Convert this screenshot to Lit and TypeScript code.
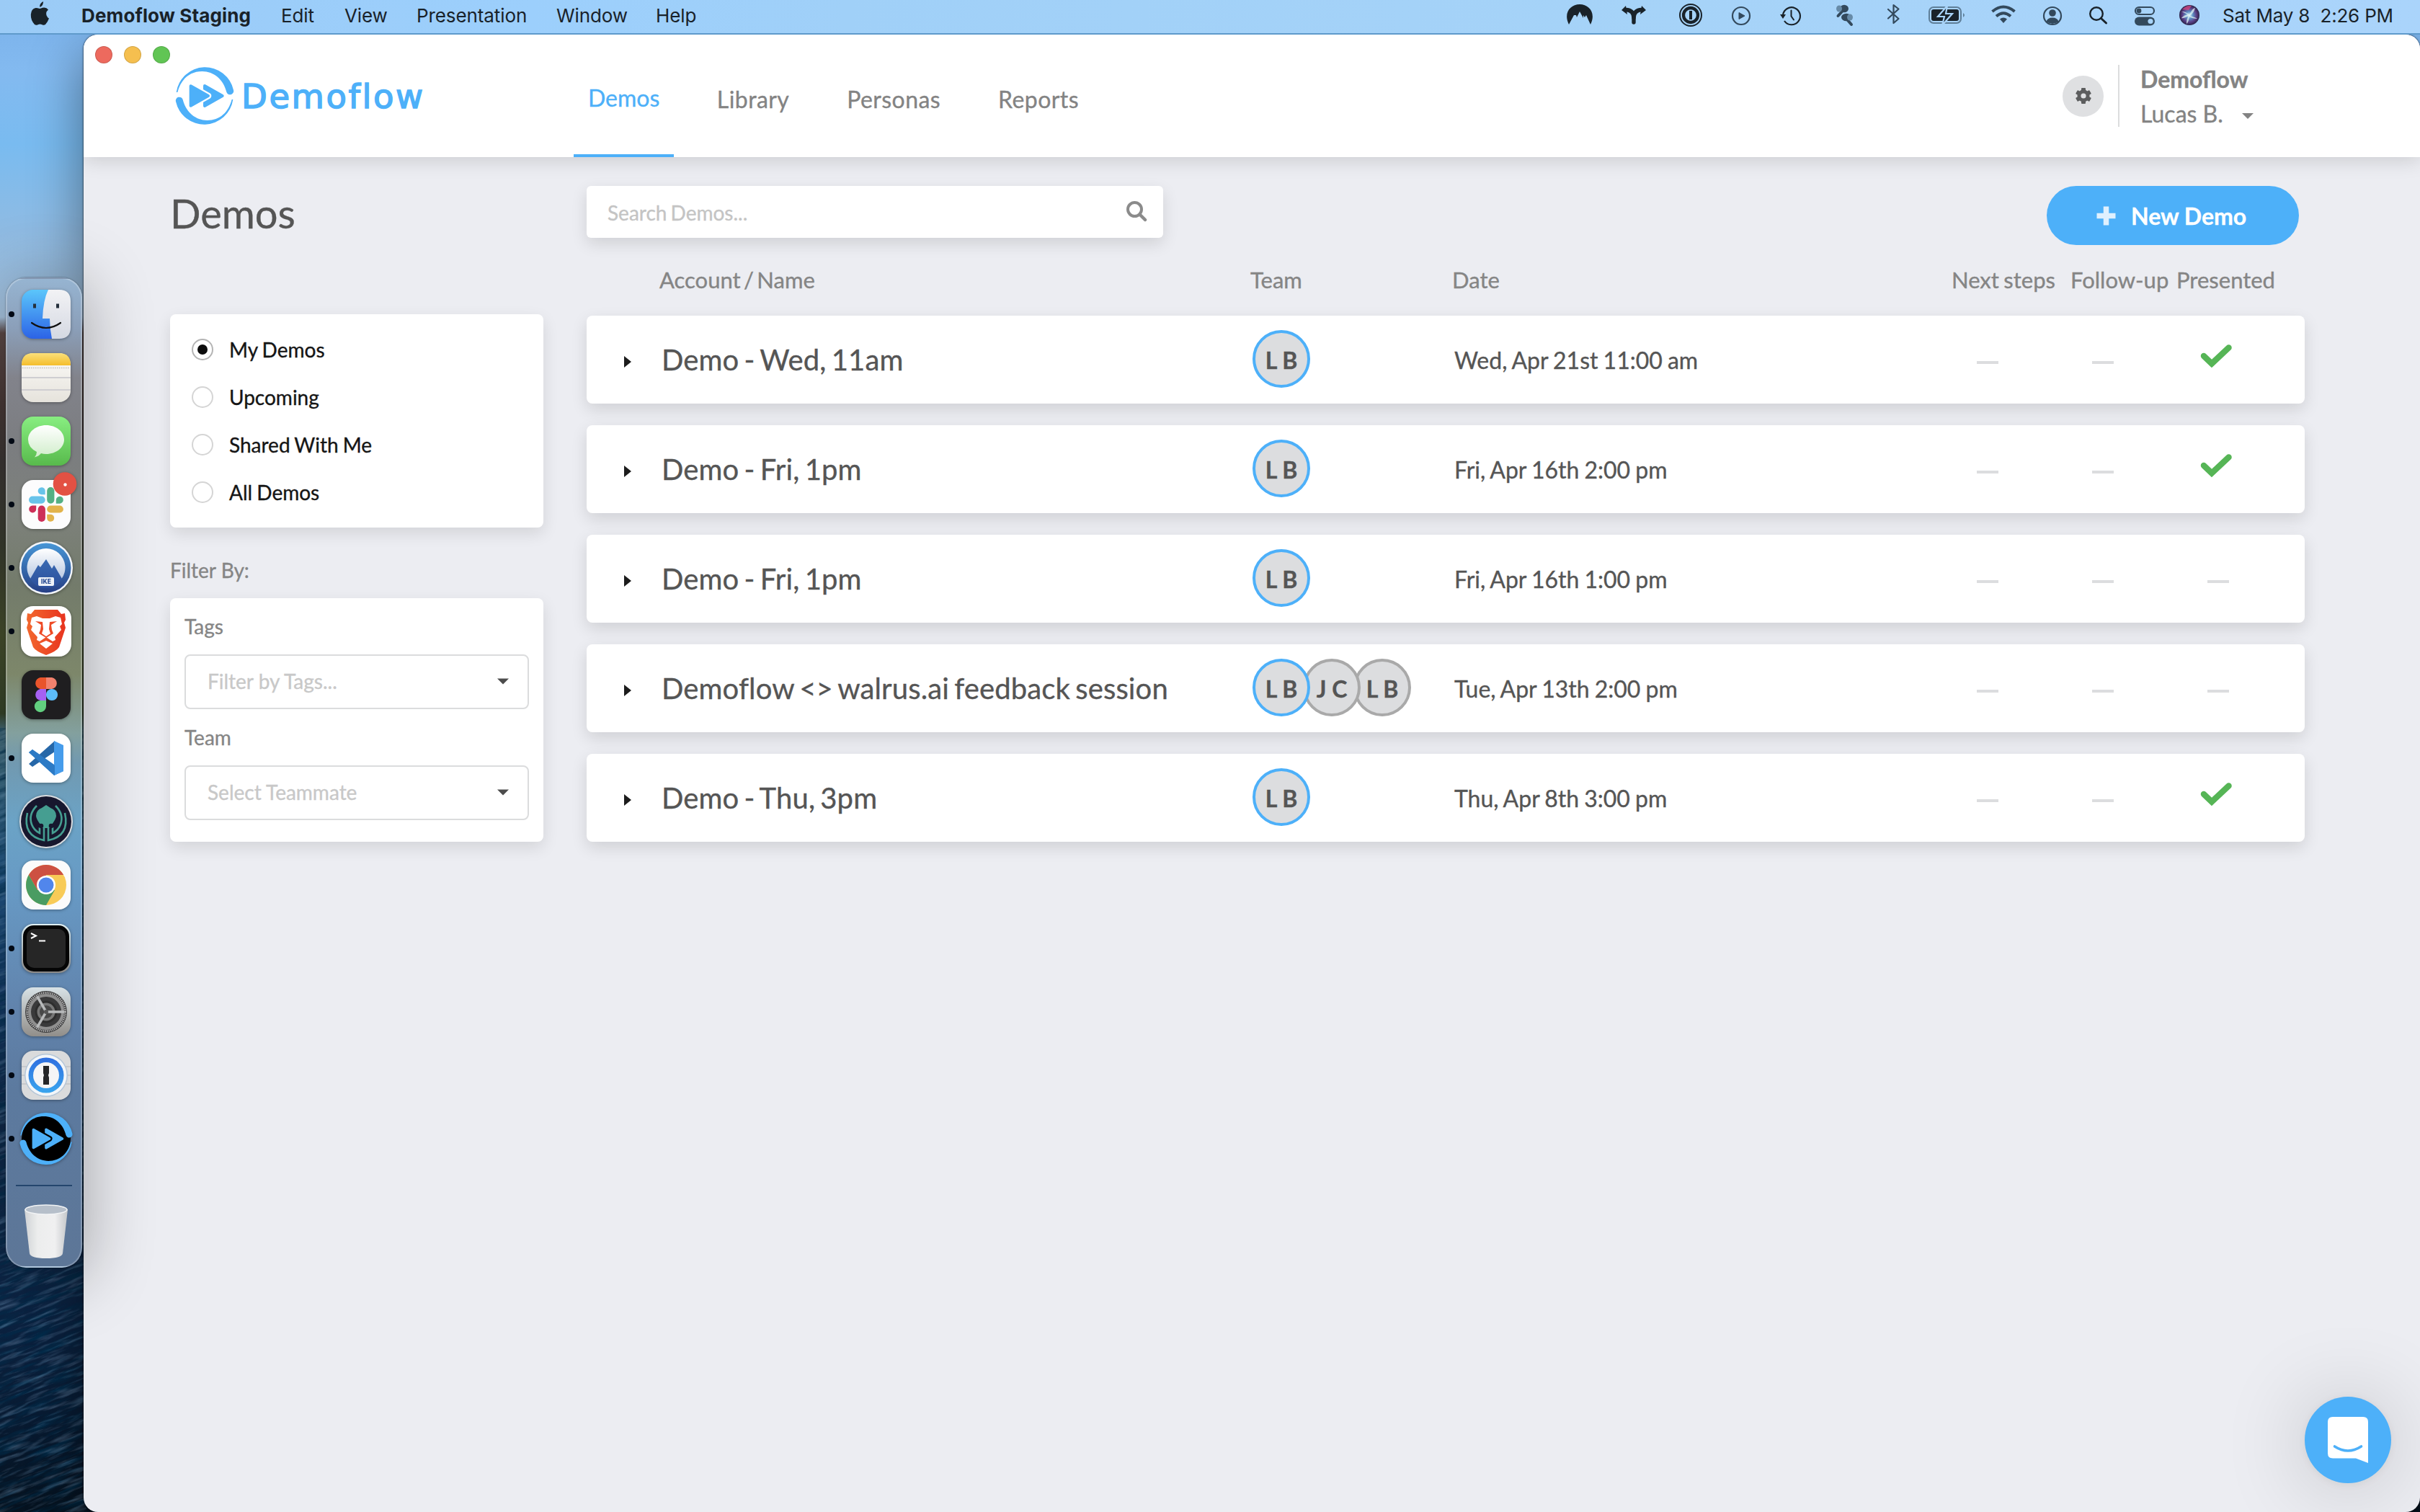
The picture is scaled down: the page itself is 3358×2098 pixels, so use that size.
import { LitElement, html, css, svg } from "lit";
import { customElement } from "lit/decorators.js";
import { classMap } from "lit/directives/class-map.js";

/* ---------- shared drawings ---------- */

const swoosh =
  "M-118-15A121 121 0 0 1 120-24A15 15 0 0 1 91-16C78-68 38-102-10-102C-64-102-99-68-113-15Z";

/* Brand mark, 240 units wide and centred on the origin. */
const brandMark = (gap: string) => svg`
  <path d=${swoosh} fill="#4db0f9"/>
  <path d=${swoosh} fill="#4db0f9" transform="rotate(180)"/>
  <path d="M0-42L74 0L0 42Z" fill="#4db0f9" stroke="#4db0f9" stroke-width="12" stroke-linejoin="round"/>
  <path d="M-58-41L15 0L-58 41Z" fill=${gap} stroke=${gap} stroke-width="26" stroke-linejoin="round"/>
  <path d="M-58-41L15 0L-58 41Z" fill="#4db0f9" stroke="#4db0f9" stroke-width="12" stroke-linejoin="round"/>
`;

/* ---------- menu bar ---------- */

const INK = "#192229";
const SOFT = "#33495c";

/* Status icons: left edge and width on the bar, and the drawing. */
const statusIcons = [
  { x: 2172, w: 40, body: svg`<path fill=${INK} d="M2177 35C2169 19 2179 7 2192 7S2215 19 2207 35L2201 22L2199 25L2197 22L2197 26L2192 17L2188 25L2187 22L2184 22Z"/>` },
  { x: 2248, w: 38, body: svg`<g fill="none" stroke=${INK} stroke-width="5.400" stroke-linecap="round"><path d="M2267 32V26Q2267 15 2256 14.500"/><path d="M2267 26Q2267 15 2278 14.500"/></g><path fill=${INK} d="M2250 15L2256 9L2258 21ZM2284 15L2278 9L2276 21Z"/>` },
  { x: 2328, w: 36, body: svg`<circle cx="2346" cy="22" r="15" fill="none" stroke=${INK} stroke-width="2"/><circle cx="2346" cy="22" r="10" fill="none" stroke=${INK} stroke-width="4.300"/><rect x="2344" y="16" width="4" height="12" fill=${INK}/>` },
  { x: 2400, w: 32, body: svg`<circle cx="2416" cy="23" r="12" fill="none" stroke=${SOFT} stroke-width="2.200"/><path d="M2413 18.500L2421 23L2413 27.500Z" fill=${SOFT} stroke=${SOFT}/>` },
  { x: 2468, w: 34, body: svg`<path d="M2474 22A12 12 0 1 1 2476 30" fill="none" stroke=${INK} stroke-width="2.200"/><path d="M2470 21H2478L2474 27Z" fill=${INK}/><path d="M2485.500 15.500V23.500L2489 28.500" fill="none" stroke=${INK} stroke-width="2" stroke-linecap="round"/>` },
  { x: 2544, w: 30, body: svg`<ellipse cx="2559" cy="13" rx="6" ry="5.300" fill=${SOFT}/><path d="M2557 16L2550.500 23" stroke=${SOFT} stroke-width="4" stroke-linecap="round"/><ellipse cx="2552" cy="13" rx="4" ry="4.600" fill="#678ba8"/><ellipse cx="2562" cy="25" rx="7" ry="5.300" fill=${SOFT}/><path d="M2563 28L2569 35" stroke=${SOFT} stroke-width="4" stroke-linecap="round"/><ellipse cx="2567" cy="25" rx="4" ry="4.600" fill="#678ba8"/>` },
  { x: 2616, w: 24, body: svg`<path d="M2620 14L2634.500 27L2627.500 33V8L2634.500 13.500L2620 26.500" fill="none" stroke=${SOFT} stroke-width="2.200" stroke-linejoin="round" stroke-linecap="round"/>` },
  { x: 2674, w: 56, body: svg`<rect x="2677" y="11" width="44" height="22" rx="6" fill="none" stroke="#5f7f99" stroke-width="2"/><path d="M2724 19Q2728 22 2724 25Z" fill="#5f7f99"/><rect x="2680" y="14" width="38" height="16" rx="3" fill=${INK}/><path d="M2702 9L2689 24H2698L2695 36L2709 20H2700Z" fill=${INK} stroke="#a8d3f8" stroke-width="2.200"/>` },
  { x: 2760, w: 40, body: svg`<g fill="none" stroke=${SOFT} stroke-width="4"><path d="M2764.500 17Q2780 4 2795.500 17"/><path d="M2770 23.500Q2780 15 2790 23.500"/></g><path d="M2775 27.500Q2780 23.500 2785 27.500L2780 33Z" fill=${SOFT}/>` },
  { x: 2832, w: 32, body: svg`<circle cx="2848" cy="23" r="12" fill="none" stroke=${SOFT} stroke-width="2.200"/><circle cx="2848" cy="19" r="4.800" fill=${SOFT}/><path d="M2839.500 31Q2841 25.500 2848 25.500T2856.500 31Q2848 37 2839.500 31Z" fill=${SOFT}/>` },
  { x: 2896, w: 32, body: svg`<circle cx="2909" cy="20" r="8.800" fill="none" stroke=${INK} stroke-width="2.400"/><path d="M2915.500 26.500L2922.500 33" stroke=${INK} stroke-width="3" stroke-linecap="round"/>` },
  { x: 2958, w: 36, body: svg`<rect x="2963" y="11" width="26" height="10" rx="5" fill="none" stroke=${SOFT} stroke-width="2.200"/><circle cx="2968" cy="16" r="3.400" fill=${SOFT}/><rect x="2962" y="24.500" width="28" height="12" rx="6" fill=${SOFT}/><circle cx="2984" cy="30.500" r="3.600" fill="#a8d3f8"/>` },
  { x: 3022, w: 32, body: svg`<defs><radialGradient id="siri"><stop offset="0" stop-color="#e8fbff"/><stop offset=".35" stop-color="#5d8fc4"/><stop offset=".7" stop-color="#5b3f86"/><stop offset="1" stop-color="#2a2448"/></radialGradient></defs><circle cx="3038" cy="22" r="14" fill="url(#siri)"/><path d="M3027 17Q3034 17 3038 22Q3042 12 3046 12Q3044 20 3038 23Q3047 25 3049 27Q3042 27 3038 24Q3037 32 3034 34Q3034 27 3037 23Q3029 27 3027 26Q3030 22 3036 21Z" fill="#dff6f4" opacity=".75"/><path d="M3028 14Q3034 8 3041 9L3037 15Z" fill="#e0467f" opacity=".7"/>` },
];

@customElement("menu-bar")
class MenuBar extends LitElement {
  static styles = css`
    :host { display: flex; align-items: center; box-sizing: border-box; height: 48px; padding: 0 37px 4px 41px;
      background: linear-gradient(90deg, #9bcbf6, #9ccffc 22%, #a0d0f8 35%, #a6d3f8 70%, #aad4fb);
      border-bottom: 2px solid #5f9acb; color: #192229; font: 400 26px "Inter", sans-serif; white-space: pre; }
    .apple { width: 28px; height: 36px; margin-right: 44px; margin-top: -4px; }
    .menu { display: grid; grid-template-columns: 277px 88px 100px 194px 138px 70px; letter-spacing: -.1px; }
    .app { font-weight: 700; letter-spacing: .13px; }
    .status { display: flex; margin-left: auto; height: 46px; margin-top: 2px; }
    .clock { margin-left: 30px; width: 237px; letter-spacing: -.18px; }
  `;
  render() {
    return html`
      <svg class="apple" viewBox="0 0 28 36"><path fill=${INK} d="M19 1Q19.500 6 14.500 9Q13 4.500 19 1ZM14 11Q16 10.800 18 9.800Q23 8.500 26 12.500Q20.500 17 25 23Q26 24.200 27 24.500Q25 30 22 33Q20 34.500 17.500 33.200Q14.500 32 11.500 33.200Q9 34.500 7 33Q1.500 27 1.800 19Q2.500 11 8.500 10Q10 9.700 14 11Z"/></svg>
      <div class="menu">
        <span class="app">Demoflow Staging</span><span>Edit</span><span>View</span>
        <span>Presentation</span><span>Window</span><span>Help</span>
      </div>
      <div class="status">
        ${statusIcons.map((s, i) => {
          const prev = statusIcons[i - 1];
          const gap = prev ? s.x - prev.x - prev.w : 0;
          return html`<svg width=${s.w} height="46" viewBox="${s.x} 0 ${s.w} 46" style="margin-left:${gap}px">${s.body}</svg>`;
        })}
      </div>
      <span class="clock">Sat May 8  2:26 PM</span>`;
  }
}

/* ---------- dock ---------- */

const tile = (fill: string) => svg`<rect x="-34" y="-34" width="68" height="68" rx="16" fill=${fill}/>`;

const dockApps = [
  { running: true, body: svg`
    <defs><linearGradient id="fb" x2="0" y2="1"><stop stop-color="#5bc6fb"/><stop offset="1" stop-color="#2c63e6"/></linearGradient>
    <linearGradient id="fw" x2="0" y2="1"><stop stop-color="#f2f2f5"/><stop offset="1" stop-color="#d5d9e2"/></linearGradient></defs>
    ${tile("url(#fb)")}<path d="M3-34H18Q34-34 34-18V18Q34 34 18 34H8Q5 20 5 6H-5Q-4-20 3-34Z" fill="url(#fw)"/>
    <path d="M-16-14.500V-8.500M16-14.500V-8.500" stroke="#26313d" stroke-width="4"/>
    <path d="M-20 12Q0 26 20 12" fill="none" stroke="#111" stroke-width="2.200" stroke-linecap="round"/>` },
  { running: false, body: svg`
    <defs><linearGradient id="nb" x2="0" y2="1"><stop stop-color="#fbfaf8"/><stop offset="1" stop-color="#e6e3dc"/></linearGradient>
    <linearGradient id="ny" x2="0" y2="1"><stop stop-color="#fbe07a"/><stop offset="1" stop-color="#f4bd2c"/></linearGradient></defs>
    ${tile("url(#nb)")}<path d="M-34-17V-18Q-34-34-18-34H18Q34-34 34-18V-17Z" fill="url(#ny)"/>
    <path d="M-33-13.500H33" stroke="#c3bfb8" stroke-width="1.300" stroke-dasharray="1.500 1.500"/>
    <path d="M-34 0H34M-34 17H34" stroke="#cfced1" stroke-width="2"/>` },
  { running: true, body: svg`
    <defs><linearGradient id="mg" x2="0" y2="1"><stop stop-color="#88ee81"/><stop offset="1" stop-color="#58ba4c"/></linearGradient>
    <linearGradient id="mw" x2="0" y2="1"><stop stop-color="#fff"/><stop offset="1" stop-color="#d0edca"/></linearGradient></defs>
    ${tile("url(#mg)")}<path d="M0-22C14-22 25-13 25-2S14 18 0 18Q-4 18-7 17Q-10 21-16 22.500Q-13 19-13 15Q-25 9-25-2C-25-13-14-22 0-22Z" fill="url(#mw)"/>` },
  { running: true, body: svg`
    ${tile("#fcfcfd")}
    <g fill="#68c3ea"><rect x="-24" y="-11.500" width="22.700" height="10.200" rx="5.100"/><path d="M-1.300-13.800H-6.300A5 5 0 1 1-1.300-19Z"/></g>
    <g fill="#54b084"><rect x="1.200" y="-24" width="10.200" height="22.700" rx="5.100"/><path d="M13.800-1.300V-6.300A5 5 0 1 1 19-1.300Z"/></g>
    <g fill="#cd2f58"><rect x="-11.300" y="1.400" width="10.200" height="22.700" rx="5.100"/><path d="M-13.800 1.400V6.400A5 5 0 1 1-19 1.400Z"/></g>
    <g fill="#e2b34b"><rect x="1.200" y="1.400" width="22.700" height="10.200" rx="5.100"/><path d="M1.200 13.800H6.200A5 5 0 1 1 1.200 19Z"/></g>
    <circle cx="26" cy="-28.500" r="16.300" fill="#e35143"/><circle cx="26.500" cy="-27.500" r="2.200" fill="#fff"/>` },
  { running: true, body: svg`
    <defs><linearGradient id="vb" x2="0" y2="1"><stop stop-color="#4796d6"/><stop offset="1" stop-color="#263f85"/></linearGradient>
    <linearGradient id="vw" x2="0" y2="1"><stop stop-color="#fff"/><stop offset="1" stop-color="#b9c9e2"/></linearGradient>
    <linearGradient id="vm" x2="0" y2="1"><stop stop-color="#3a6ab3"/><stop offset="1" stop-color="#2c4f9b"/></linearGradient></defs>
    <circle r="37" fill="#f2f5fa"/><circle r="34.500" fill="url(#vb)"/>
    <path d="M-21.500 15A26.500 26.500 0 1 1 21.500 15Z" fill="url(#vw)"/>
    <path d="M-22 15L-11-4L-8-1L0-12L8 1L11-4L22 15Q14 28 0 28T-22 15Z" fill="url(#vm)"/>
    <rect x="-11" y="13" width="22" height="12" rx="2" fill="#eef2f8"/>
    <text y="22.300" text-anchor="middle" font-family="Inter, sans-serif" font-weight="800" font-size="8.500" fill="#2a4c93">IKE</text>` },
  { running: true, body: svg`
    <defs><linearGradient id="br"><stop stop-color="#f2682e"/><stop offset="1" stop-color="#e8341f"/></linearGradient></defs>
    <rect x="-35" y="-35" width="70" height="70" rx="17" fill="#fff"/>
    <path d="M-16-30H16L21-24L26-25L27-16L25-12L27-5L18 22Q14 28 0 33Q-14 28-18 22L-27-5L-25-12L-27-16L-26-25L-21-24Z" fill="url(#br)"/>
    <path d="M-13-21L-20-19L-22-10L-19-7L-21-2L-12 8L-13 12L-9 14L0 8L9 14L13 12L12 8L21-2L19-7L22-10L20-19L13-21L5-18H-5Z" fill="#fff"/>
    <path d="M-15-14L-5-13L-4-3L-6 3L0 7L6 3L4-3L5-13L15-14L7-9L8-2L10 3L0 9L-10 3L-8-2L-7-9Z" fill="#ee4a25"/>
    <path d="M-9 17L0 13L9 17L0 24Z" fill="#fff"/>` },
  { running: false, body: svg`
    ${tile("#1f1e20")}
    <path d="M0-24H-8A8.100 8.100 0 0 0-8-8H0Z" fill="#e9542b"/><path d="M0-24H8A8.100 8.100 0 0 1 8-8H0Z" fill="#f1816d"/>
    <path d="M0-8H-8A8.100 8.100 0 0 0-8 8H0Z" fill="#a660f2"/><circle cx="8" cy="0" r="8.100" fill="#5dbcf9"/>
    <path d="M0 8H-8A8.100 8.100 0 1 0 0 16Z" fill="#62cf7f"/>` },
  { running: true, body: svg`
    ${tile("#fff")}
    <path d="M-24-8L-19-12L24 18L11 24L-24-8Z" fill="#2f7fcb"/><path d="M-24 8L-19 12L12-9V-24L-24 8Z" fill="#2667a8"/>
    <path d="M11-24L24-18V18L11 24Z" fill="#469ceb"/><path d="M-24-8L-19-12L12 10V24Z" fill="#2c7ac5"/>` },
  { running: false, body: svg`
    <circle r="37" fill="#d9dce0"/><circle r="35" fill="#17172e"/>
    <path d="M-14-8Q-14-16-6-19L0-23L6-19Q14-16 14-8Q14-4 8 4V9H-8V4Q-14-4-14-8Z" fill="#459e91"/>
    <g fill="none" stroke="#459e91" stroke-width="2.600"><path d="M-26-12Q-33 20-3 26V9"/><path d="M26-12Q33 20 3 26V9"/><path d="M-13-22Q-25-10-20 4Q-17 12-9 16V8"/><path d="M13-22Q25-10 20 4Q17 12 9 16V8"/></g>
    <circle cx="-7" cy="6" r="3.300" fill="#17172e"/><circle cx="7" cy="6" r="3.300" fill="#17172e"/>` },
  { running: false, body: svg`
    ${tile("#fbfbfb")}
    <circle r="28" fill="#f8cb57"/><path d="M-24.200-14A28 28 0 0 1 24.200-14H0L-12 7Z" fill="#cd5142"/>
    <path d="M-24.200-14A28 28 0 0 0 0 28L12 7L-12 7Z" fill="#4a9c62"/>
    <circle r="13" fill="#fff"/><circle r="10.500" fill="#5186ec"/>` },
  { running: true, body: svg`
    <defs><linearGradient id="tb" x2="0" y2="1"><stop stop-color="#dff0f4"/><stop offset="1" stop-color="#8a8987"/></linearGradient></defs>
    ${tile("url(#tb)")}<rect x="-32" y="-32" width="64" height="64" rx="15" fill="#050505"/><rect x="-27" y="-27" width="54" height="54" rx="10" fill="#262626"/>
    <path d="M-21-21L-14-17.500L-21-14M-10-10.500H-1" fill="none" stroke="#fff" stroke-width="2"/>` },
  { running: true, body: svg`
    <defs><linearGradient id="sb" x2="0" y2="1"><stop stop-color="#d8e2e6"/><stop offset="1" stop-color="#918e8a"/></linearGradient></defs>
    ${tile("url(#sb)")}<circle r="29" fill="#3a3a3b"/><circle r="26.500" fill="none" stroke="#b9b9b9" stroke-width="3" stroke-dasharray="1.300 1.300"/>
    <circle r="23" fill="none" stroke="#8f8f8f" stroke-width="4"/><circle r="14" fill="#777" stroke="#2e2e2e" stroke-width="3"/><circle r="9" fill="#484848"/>
    <path d="M0 0H25M0 0L-12.500-21.600M0 0L-12.500 21.600" stroke="#b7b9ba" stroke-width="3.500"/><circle r="3" fill="#555"/>` },
  { running: true, body: svg`
    <defs><linearGradient id="pb" x2="0" y2="1"><stop stop-color="#2f6fe0"/><stop offset="1" stop-color="#3aa5ee"/></linearGradient></defs>
    ${tile("#dadbdc")}<path d="M-34-12H34M-34 0H34M-34 12H34" stroke="#c1c3c6" stroke-width="1.500"/>
    <circle r="30" fill="#b4c6d8"/><circle r="28.500" fill="#f3f6f9"/><circle r="24.500" fill="url(#pb)"/><circle r="18" fill="#f5f5f6"/>
    <path d="M-4-13H4V-3L3 0L4 3V13H-4V3L-3 0L-4-3Z" fill="#252628"/>` },
  { running: true, body: svg`<circle r="34" fill="#000"/><g transform="scale(.303)">${brandMark("#000")}</g>` },
];

@customElement("app-dock")
class AppDock extends LitElement {
  static styles = css`
    :host { display: flex; flex-direction: column; align-items: center; box-sizing: border-box; width: 106px; height: 1374px;
      padding-top: 5px; border-radius: 28px; border: 2px solid rgba(255,255,255,.24);
      box-shadow: 0 0 2px rgba(0,0,0,.5), 0 10px 90px 8px rgba(0,0,0,.3);
      background: linear-gradient(#96b4d1, #8b9fb9 5%, #82838b 10%, #7b7d80 17%, #7d817b 24%, #737b6b 31%, #7d876a 40%, #83a09e 46%, #7199b0 49%, #6ba3c6 55%, #6799c4 62%, #6183ac 74%, #5c7a9f 82%, #5d7697); }
    .slot { position: relative; width: 102px; height: 88px; display: grid; place-items: center; }
    .slot svg { overflow: visible; filter: drop-shadow(0 1px 2px rgba(0,0,0,.35)); margin-left: 6px; }
    .dot { position: absolute; left: 2px; top: 40px; width: 8px; height: 8px; border-radius: 50%; background: #020914; }
    .line { width: 78px; height: 2px; margin: 20px 0 25px; background: #24466d; }
    .trash { margin-left: 6px; }
  `;
  render() {
    return html`
      ${dockApps.map((a) => html`<div class="slot">
        ${a.running ? html`<i class="dot"></i>` : null}
        <svg width="76" height="76" viewBox="-38 -38 76 76">${a.body}</svg></div>`)}
      <div class="line"></div>
      <svg class="trash" width="60" height="76" viewBox="0 0 60 76">
        <defs><linearGradient id="tr"><stop stop-color="#cfd2d5"/><stop offset=".3" stop-color="#eceded"/><stop offset=".7" stop-color="#f0f0f1"/><stop offset="1" stop-color="#c4c7ca"/></linearGradient></defs>
        <path d="M0 7L7 68Q8 75 30 75T53 68L60 7Z" fill="url(#tr)"/><ellipse cx="30" cy="7.500" rx="29" ry="6.500" fill="#b6bfca" stroke="#f1f3f5" stroke-width="1.500"/>
      </svg>`;
  }
}

/* ---------- application window ---------- */

interface Demo { name: string; team: string[]; date: string; presented: boolean; }

const demos: Demo[] = [
  { name: "Demo - Wed, 11am", team: ["L B"], date: "Wed, Apr 21st 11:00 am", presented: true },
  { name: "Demo - Fri, 1pm", team: ["L B"], date: "Fri, Apr 16th 2:00 pm", presented: true },
  { name: "Demo - Fri, 1pm", team: ["L B"], date: "Fri, Apr 16th 1:00 pm", presented: false },
  { name: "Demoflow <> walrus.ai feedback session", team: ["L B", "J C", "L B"], date: "Tue, Apr 13th 2:00 pm", presented: false },
  { name: "Demo - Thu, 3pm", team: ["L B"], date: "Thu, Apr 8th 3:00 pm", presented: true },
];

@customElement("app-header")
class AppHeader extends LitElement {
  static styles = css`
    :host { position: relative; z-index: 1; display: flex; align-items: center; height: 170px; background: #fff; color: #838383;
      font-size: 32px; box-shadow: 0 4px 26px rgba(0,0,0,.15); }
    .lights { position: absolute; left: 16px; top: 16px; display: flex; gap: 16px; }
    .lights i { box-sizing: border-box; width: 24px; height: 24px; border-radius: 50%; border: 1px solid rgba(0,0,0,.14); }
    .red { background: #ed6a5e; } .amber { background: #f5bf4f; } .green { background: #61c554; }
    .brand { display: flex; align-items: center; width: 553px; margin-left: 127px; color: #4db0f9; }
    .brand svg { overflow: visible; }
    .word { margin-left: 10px; padding-top: 1px; font: 400 46.500px "DejaVu Sans", sans-serif; letter-spacing: 2.6px; -webkit-text-stroke: 1.5px currentColor; }
    nav { display: flex; gap: 40px; height: 170px; letter-spacing: .42px; }
    .tab { box-sizing: border-box; display: flex; align-items: center; height: 170px; padding: 13px 20px 0; border-bottom: 4px solid transparent; }
    .tab.on { color: #4db0f9; border-color: #4db0f9; padding: 9px 19.500px 0 20px; letter-spacing: 0; }
    .gear { width: 57px; height: 57px; margin-left: auto; border-radius: 50%; background: #dfe0e2; display: grid; place-items: center; }
    .rule { width: 2px; height: 86px; margin: 0 29px 0 20px; background: #dcddde; }
    .who { width: 388px; line-height: 48px; padding-top: 1px; }
    .who b { display: block; }
    .who svg { margin-left: 25px; vertical-align: 4px; }
  `;
  render() {
    return html`
      <div class="lights"><i class="red"></i><i class="amber"></i><i class="green"></i></div>
      <div class="brand"><svg width="82" height="82" viewBox="-123 -123 246 246">${brandMark("#fff")}</svg><span class="word">Demoflow</span></div>
      <nav>
        ${["Demos", "Library", "Personas", "Reports"].map((t, i) => html`<div class=${classMap({ tab: true, on: i === 0 })}>${t}</div>`)}
      </nav>
      <div class="gear"><svg width="24" height="24" viewBox="-12 -12 24 24">
        <g fill="#5c5d5e">${[0, 60, 120].map((a) => svg`<rect x="-3" y="-11" width="6" height="22" rx="1" transform="rotate(${a})"/>`)}</g>
        <circle r="6" fill="none" stroke="#5c5d5e" stroke-width="5"/><circle r="3.600" fill="#dfe0e2"/></svg></div>
      <div class="rule"></div>
      <div class="who"><b>Demoflow</b>Lucas B.<svg width="18" height="10" viewBox="0 0 18 10"><path d="M1 1H17L9 9Z" fill="#838383"/></svg></div>`;
  }
}

@customElement("side-filters")
class SideFilters extends LitElement {
  static styles = css`
    :host { display: block; font-size: 28px; line-height: 34px; color: #858585; }
    h1 { margin: 44px 0 106px; font-weight: 400; font-size: 56px; line-height: 68px; color: #555; }
    .card { background: #fff; border-radius: 8px; box-shadow: 0 8px 22px rgba(0,0,0,.11); }
    .views { padding: 16px 30px; color: #151515; word-spacing: -1px; }
    .view { display: flex; align-items: center; height: 66px; gap: 22px; }
    .radio { box-sizing: border-box; width: 30px; height: 30px; border: 2px solid #d5d5d5; border-radius: 50%; display: grid; place-items: center; }
    .on .radio { border-color: #b4b4b4; }
    .on .radio::after { content: ""; width: 14px; height: 14px; border-radius: 50%; background: #0c0c0c; }
    .caption { margin: 42px 0 22px; }
    .filters { padding: 22px 20px 30px; }
    .select { box-sizing: border-box; display: flex; align-items: center; justify-content: space-between; height: 76px; margin: 22px 0 22px;
      padding: 0 26px 2px 30px; border: 2px solid #dbdcdd; border-radius: 8px; color: #c8c8c8; }
    .select:last-child { margin-bottom: 0; }
  `;
  private picker(label: string, hint: string) {
    return html`<div>${label}</div><div class="select">${hint}
      <svg width="16" height="9" viewBox="0 0 16 9"><path d="M0 .5H16L8 8.500Z" fill="#4c4c4c"/></svg></div>`;
  }
  render() {
    return html`
      <h1>Demos</h1>
      <div class="card views">
        ${["My Demos", "Upcoming", "Shared With Me", "All Demos"].map((v, i) => html`<div class=${classMap({ view: true, on: i === 0 })}><i class="radio"></i>${v}</div>`)}
      </div>
      <div class="caption">Filter By:</div>
      <div class="card filters">${this.picker("Tags", "Filter by Tags...")}${this.picker("Team", "Select Teammate")}</div>`;
  }
}

@customElement("demo-list")
class DemoList extends LitElement {
  static styles = css`
    :host { display: block; padding-top: 40px; }
    .top { display: flex; justify-content: space-between; align-items: flex-start; height: 82px; }
    .search { box-sizing: border-box; display: flex; align-items: center; justify-content: space-between; width: 800px; height: 72px;
      padding: 2px 22px 0 29px; border-radius: 6px; background: #fff; color: #c4c4c4; font-size: 28px; word-spacing: -2px; box-shadow: 0 8px 22px rgba(0,0,0,.12); }
    .search svg { margin-top: -4px; }
    .new { box-sizing: border-box; display: flex; align-items: center; width: 350px; height: 82px; margin-right: 8px; padding: 1px 0 0 68px; gap: 20px;
      border-radius: 41px; background: #4db0f9; color: #fff; font-size: 32px; font-weight: 700; }
    .heads { display: grid; grid-template-columns: 820px 280px 693px 165px 147px 1fr; margin: 28px 0 30px; padding-left: 101px;
      font-size: 31px; line-height: 40px; color: #858585; white-space: nowrap; word-spacing: -1.5px; }
    .heads .first { word-spacing: -3.6px; }
    .row { display: grid; grid-template-columns: 104px 820px 280px 660px 160px 160px 159px; align-items: center; height: 122px; margin-bottom: 30px;
      border-radius: 8px; background: #fff; color: #555; box-shadow: 0 8px 22px rgba(0,0,0,.12); }
    .caret { margin: 5px 0 0 52px; display: block; }
    .name { font-size: 40px; line-height: 48px; word-spacing: -3.2px; letter-spacing: .14px; }
    .team { display: flex; margin-bottom: 2px; }
    .face { box-sizing: border-box; width: 80px; height: 80px; margin-right: -10px; border: 4px solid #a9a9a9; border-radius: 50%; background: #dcdddf;
      display: grid; place-items: center; font-size: 32px; font-weight: 700; padding-top: 3px; position: relative; }
    .face.me { border-color: #4db0f9; z-index: 3; }
    .face.mid { z-index: 2; }
    .date { font-size: 32px; line-height: 38px; padding-top: 1px; word-spacing: -1.1px; }
    .flag { display: grid; place-items: center; }
    .dash { width: 30px; height: 4px; margin-top: 8px; background: #dcdddf; }
    .tick { margin: -10px 6px 0 0; }
  `;
  private flag(done: boolean) {
    return html`<div class="flag">${done
      ? html`<svg class="tick" width="46" height="34" viewBox="0 0 46 34"><path d="M6 17L17 27.500L40.500 5.500" fill="none" stroke="#56b556" stroke-width="8.500" stroke-linecap="round"/></svg>`
      : html`<i class="dash"></i>`}</div>`;
  }
  render() {
    return html`
      <div class="top">
        <div class="search">Search Demos...
          <svg width="30" height="30" viewBox="0 0 30 30"><circle cx="12.500" cy="12.500" r="9.500" fill="none" stroke="#8b8b8b" stroke-width="4"/><path d="M20 20L27 27" stroke="#8b8b8b" stroke-width="4.500" stroke-linecap="round"/></svg>
        </div>
        <div class="new"><svg width="29" height="29" viewBox="0 0 29 29"><path d="M14.500 1.500V27.500M1.500 14.500H27.500" stroke="#dff0fe" stroke-width="7.500"/></svg>New Demo</div>
      </div>
      <div class="heads"><span class="first">Account / Name</span><span>Team</span><span>Date</span><span>Next steps</span><span>Follow-up</span><span>Presented</span></div>
      ${demos.map((d) => html`<div class="row">
        <svg class="caret" width="10" height="16" viewBox="0 0 10 16"><path d="M0 0L10 8L0 16Z" fill="#1c1c1c"/></svg>
        <div class="name">${d.name}</div>
        <div class="team">${d.team.map((t, i) => html`<span class=${classMap({ face: true, me: i === 0, mid: i === 1 })}>${t}</span>`)}</div>
        <div class="date">${d.date}</div>
        ${this.flag(false)}${this.flag(false)}${this.flag(d.presented)}
      </div>`)}`;
  }
}

@customElement("app-root")
class AppRoot extends LitElement {
  static styles = css`
    :host { position: relative; display: block; width: 3358px; height: 2098px; overflow: hidden; font-family: "Lato", sans-serif;
      background: linear-gradient(#7db4ec 40px, #83baf0 100px, #79bbf0 200px, #8fbbe3 320px, #a9c6e2 440px, #5d4a48 462px, #4a3a38 560px, #3c3736 640px, #3a3e30 760px, #47502e 880px, #37452a 990px, #48707f 1015px, #396b86 1090px, #23588a 1220px, #153a66 1400px, #10294a 1560px, #0f2a4c 1700px, #0c2444 1800px, #081b33 1960px, #05121f); }
    .sea { position: absolute; left: 0; top: 1010px; }
    .window { position: absolute; left: 116px; top: 48px; width: 3242px; height: 2050px; border-radius: 20px; background: #ecedf2;
      overflow: hidden; -webkit-text-stroke: .35px currentColor; }
    .shade { position: absolute; left: 116px; top: 48px; width: 3242px; height: 2050px; border-radius: 20px;
      box-shadow: 0 0 2px 1px rgba(0,0,0,.45), 0 30px 70px 4px rgba(0,0,0,.4); }
    .body { display: grid; grid-template-columns: 518px 2384px; column-gap: 60px; padding-left: 120px; }
    .bar { position: relative; }
    .dock { position: absolute; left: 8px; top: 385px; }
    .chat { position: absolute; left: 3198px; top: 1938px; width: 120px; height: 120px; border-radius: 50%; background: #4db0f9;
      box-shadow: 0 2px 12px rgba(0,0,0,.06), 0 4px 120px rgba(0,0,0,.2); }
    .chat svg { display: block; }
  `;
  render() {
    return html`
      <svg class="sea" width="120" height="1088" viewBox="0 0 120 1088">
        <filter id="waves" x="0" y="0" width="100%" height="100%">
          <feTurbulence type="fractalNoise" baseFrequency=".022 .17" numOctaves="4" seed="7"/>
          <feColorMatrix values="0 0 0 0 .3  0 0 0 0 .5  0 0 0 0 .74  2.400 0 0 0 -1.150"/>
        </filter>
        <filter id="dips" x="0" y="0" width="100%" height="100%">
          <feTurbulence type="fractalNoise" baseFrequency=".018 .14" numOctaves="4" seed="21"/>
          <feColorMatrix values="0 0 0 0 0  0 0 0 0 .03  0 0 0 0 .08  2.600 0 0 0 -1.100"/>
        </filter>
        <g transform="rotate(-22)"><rect x="-500" y="0" width="700" height="1300" filter="url(#dips)" opacity=".7"/><rect x="-500" y="0" width="700" height="1300" filter="url(#waves)" opacity=".4"/></g>
      </svg>
      <div class="shade"></div>
      <menu-bar class="bar"></menu-bar>
      <div class="window">
        <app-header></app-header>
        <div class="body"><side-filters></side-filters><demo-list></demo-list></div>
      </div>
      <div class="chat"><svg width="120" height="120" viewBox="0 0 120 120">
        <path d="M39 28H81Q88 28 88 35V92L71 85.500H39Q32 85.500 32 78.500V35Q32 28 39 28Z" fill="#fff"/>
        <path d="M41.500 69Q60 81 78.500 69" fill="none" stroke="#4db0f9" stroke-width="3.600" stroke-linecap="round"/></svg></div>
      <app-dock class="dock"></app-dock>`;
  }
}
